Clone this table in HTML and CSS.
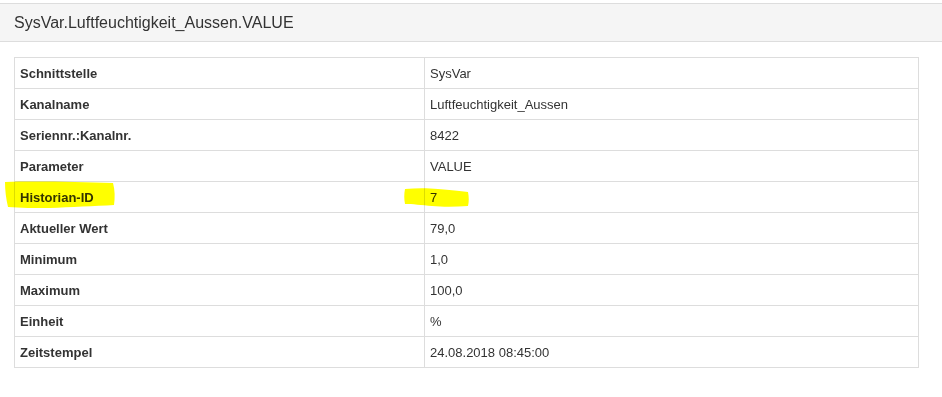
FILE: index.html
```html
<!DOCTYPE html>
<html lang="de">
<head>
<meta charset="utf-8">
<title>SysVar.Luftfeuchtigkeit_Aussen.VALUE</title>
<link rel="stylesheet" href="styles.css">
</head>
<body>
<div class="page">
  <div class="panel">
    <div class="panel-heading">
      <h3 class="panel-title">SysVar.Luftfeuchtigkeit_Aussen.VALUE</h3>
    </div>
    <div class="panel-body">
      <table class="info-table">
        <colgroup><col class="col-label"><col class="col-value"></colgroup>
        <tbody>
          <tr><th>Schnittstelle</th><td>SysVar</td></tr>
          <tr><th>Kanalname</th><td>Luftfeuchtigkeit_Aussen</td></tr>
          <tr><th>Seriennr.:Kanalnr.</th><td>8422</td></tr>
          <tr><th>Parameter</th><td>VALUE</td></tr>
          <tr><th>Historian-ID</th><td>7</td></tr>
          <tr><th>Aktueller Wert</th><td>79,0</td></tr>
          <tr><th>Minimum</th><td>1,0</td></tr>
          <tr><th>Maximum</th><td>100,0</td></tr>
          <tr><th>Einheit</th><td>%</td></tr>
          <tr><th>Zeitstempel</th><td>24.08.2018 08:45:00</td></tr>
        </tbody>
      </table>
    </div>
  </div>
  <svg class="marker" width="942" height="397" viewBox="0 0 942 397" aria-hidden="true">
    <path d="M5,182 C35,181 80,182 113,183 C115,190 115,198 114,205 C95,206 70,207 50,208 C35,208 20,208 8,207 C6,199 5,190 5,182 Z" />
    <path d="M405,189 C416,188 428,188 438,189 C450,190 460,191 468,192 C469,197 469,202 468,206 C455,207 442,207 432,206 C422,205 412,204 405,204 C404,199 404,194 405,189 Z" />
  </svg>
</div>
</body>
</html>
```

FILE: styles.css
```css
html, body {
  margin: 0;
  padding: 0;
  background: #fff;
}

body {
  font-family: "Liberation Sans", Arial, sans-serif;
  font-size: 13px;
  color: #333;
}

.page {
  position: relative;
  width: 942px;
  height: 397px;
  padding-top: 3px;
  box-sizing: border-box;
}

.panel-heading {
  background: #f5f5f5;
  border-top: 1px solid #ddd;
  border-bottom: 1px solid #ddd;
  padding: 10px 14px;
}

.panel-title {
  margin: 0;
  font-size: 16px;
  font-weight: normal;
  line-height: 17px;
  color: #333;
}

.panel-body {
  padding: 15px 23px 0 14px;
}

.info-table {
  width: 100%;
  border-collapse: collapse;
  border: 1px solid #ddd;
}

.col-label {
  width: 410px;
}

.info-table th,
.info-table td {
  border: 1px solid #ddd;
  padding: 6px 5px 4px;
  line-height: 20px;
  height: 20px;
  text-align: left;
  vertical-align: middle;
}

.info-table th {
  font-weight: bold;
}

.info-table td {
  font-weight: normal;
}

.marker {
  position: absolute;
  top: 0;
  left: 0;
  mix-blend-mode: multiply;
  pointer-events: none;
}

.marker path {
  fill: #ffff00;
}
```
